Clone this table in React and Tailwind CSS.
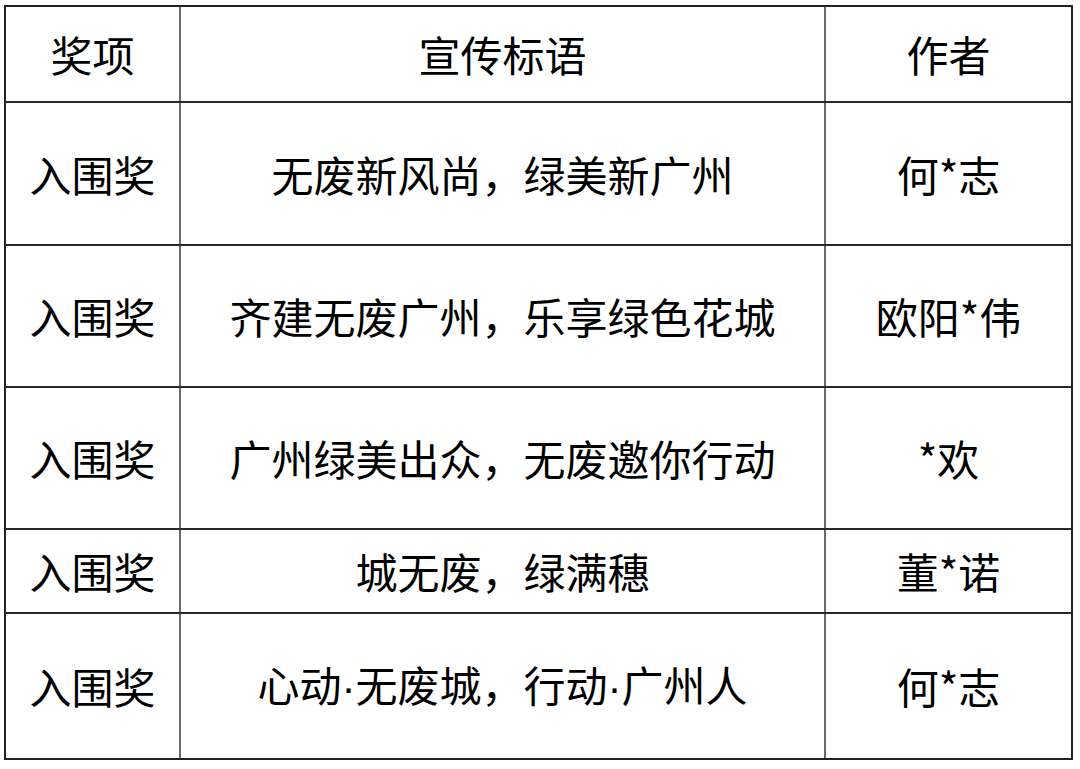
const Dot = () => <span style={{ fontFamily: '"Liberation Sans", sans-serif' }}>·</span>;

const rows = [
  { h: "h-[143px]", award: "入围奖", slogan: "无废新风尚，绿美新广州", author: "何*志" },
  { h: "h-[142px]", award: "入围奖", slogan: "齐建无废广州，乐享绿色花城", author: "欧阳*伟" },
  { h: "h-[142px]", award: "入围奖", slogan: "广州绿美出众，无废邀你行动", author: "*欢" },
  { h: "h-[84px]", award: "入围奖", slogan: "城无废，绿满穗", author: "董*诺" },
  {
    h: "h-[144px]",
    award: "入围奖",
    slogan: (
      <span>
        心动<Dot />无废城，行动<Dot />广州人
      </span>
    ),
    author: "何*志",
  },
];

function Row({ h, cells, last }) {
  return (
    <div className={`flex ${h} ${last ? "" : "border-b-2 border-[#2a2a2a]"}`}>
      <div className="w-[175px] flex items-center justify-center border-r-2 border-[#6b6b6b]">{cells[0]}</div>
      <div className="w-[645px] flex items-center justify-center border-r-2 border-[#6b6b6b]">{cells[1]}</div>
      <div className="flex-1 flex items-center justify-center">{cells[2]}</div>
    </div>
  );
}

export default function App() {
  return (
    <div className="w-[1080px] h-[769px] bg-white pl-[4px] pt-[5px]">
      <div
        className="w-[1069px] border-2 border-[#222] text-[42px] text-black leading-none"
        style={{ fontFamily: '"Noto Sans CJK SC", "Microsoft YaHei", sans-serif' }}
      >
        <Row h="h-[96px]" cells={["奖项", "宣传标语", "作者"]} />
        {rows.map((r, i) => (
          <Row key={i} h={r.h} cells={[r.award, r.slogan, r.author]} last={i === rows.length - 1} />
        ))}
      </div>
    </div>
  );
}
